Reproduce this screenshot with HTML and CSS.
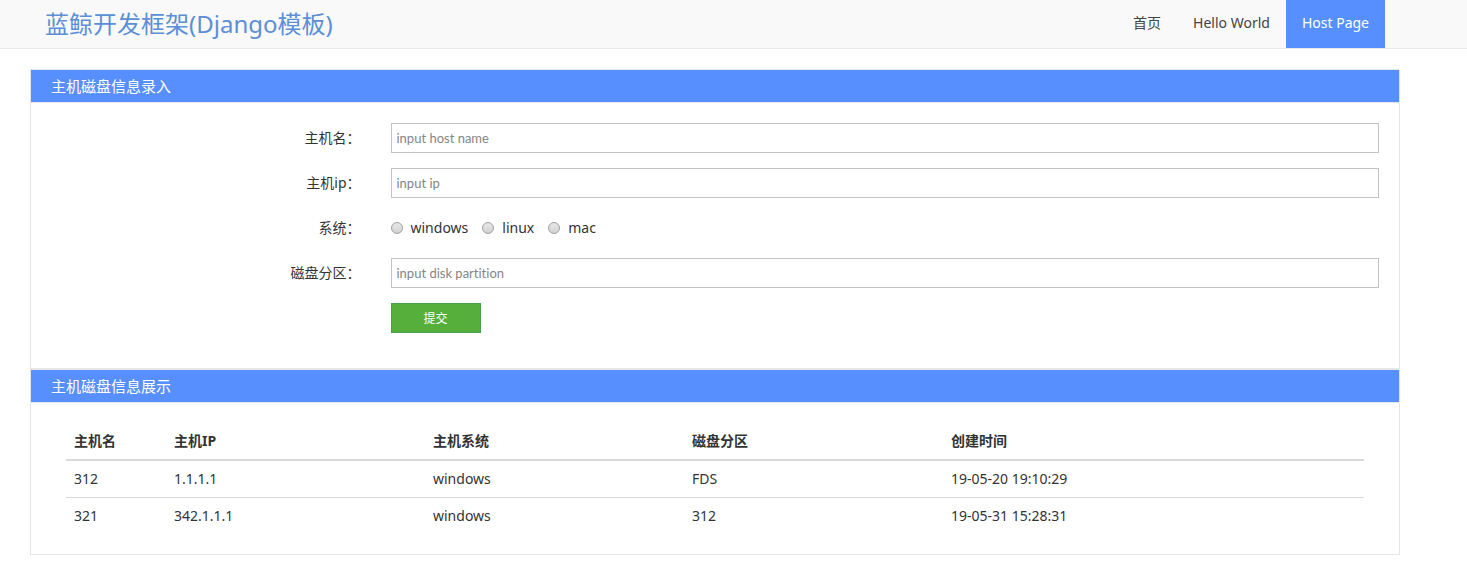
FILE: index.html
```html
<!DOCTYPE html>
<html lang="zh-CN">
<head>
<meta charset="utf-8">
<meta name="viewport" content="width=device-width, initial-scale=1">
<title>蓝鲸开发框架(Django模板)</title>
<link rel="stylesheet" href="styles.css">
</head>
<body>
<header class="navbar">
  <a class="brand" href="#">蓝鲸开发框架(Django模板)</a>
  <nav class="nav">
    <a class="nav-link" href="#">首页</a>
    <a class="nav-link" href="#">Hello World</a>
    <a class="nav-link active" href="#" aria-current="page">Host Page</a>
  </nav>
</header>
<main class="content">
  <section class="panel">
    <h2 class="panel-heading">主机磁盘信息录入</h2>
    <form class="panel-body">
      <div class="form-row">
        <label class="form-label" for="host-name">主机名：</label>
        <div class="form-field"><input class="text-input" id="host-name" type="text" placeholder="input host name"></div>
      </div>
      <div class="form-row">
        <label class="form-label" for="host-ip">主机ip：</label>
        <div class="form-field"><input class="text-input" id="host-ip" type="text" placeholder="input ip"></div>
      </div>
      <div class="form-row" role="radiogroup" aria-labelledby="os-label">
        <span class="form-label" id="os-label">系统：</span>
        <div class="form-field radios">
          <label class="radio-label"><input class="radio" type="radio" name="os" value="windows">windows</label>
          <label class="radio-label"><input class="radio" type="radio" name="os" value="linux">linux</label>
          <label class="radio-label"><input class="radio" type="radio" name="os" value="mac">mac</label>
        </div>
      </div>
      <div class="form-row">
        <label class="form-label" for="partition">磁盘分区：</label>
        <div class="form-field"><input class="text-input" id="partition" type="text" placeholder="input disk partition"></div>
      </div>
      <div class="form-row">
        <span class="form-label"></span>
        <div class="form-field"><button class="submit" type="button">提交</button></div>
      </div>
    </form>
  </section>
  <section class="panel">
    <h2 class="panel-heading">主机磁盘信息展示</h2>
    <div class="table-wrap">
      <table class="table">
        <colgroup><col class="col-name"><col class="col-info"><col class="col-info"><col class="col-info"><col></colgroup>
        <thead>
          <tr><th>主机名</th><th>主机IP</th><th>主机系统</th><th>磁盘分区</th><th>创建时间</th></tr>
        </thead>
        <tbody>
          <tr><td>312</td><td>1.1.1.1</td><td>windows</td><td>FDS</td><td>19-05-20 19:10:29</td></tr>
          <tr><td>321</td><td>342.1.1.1</td><td>windows</td><td>312</td><td>19-05-31 15:28:31</td></tr>
        </tbody>
      </table>
    </div>
  </section>
</main>
</body>
</html>
```
FILE: styles.css
```css
* { box-sizing: border-box; }

body {
  margin: 0;
  background: #fff;
  color: #333;
  font: 14px/20px "Noto Sans", "Noto Sans CJK SC", sans-serif;
}

.navbar {
  display: flex;
  justify-content: space-between;
  padding: 0 82px 0 45px;
  background: #f9f9f9;
  border-bottom: 1px solid #ebebeb;
}

.brand {
  color: #5c8fd6;
  font-size: 24px;
  line-height: 48px;
  text-decoration: none;
}

.nav { display: flex; }

.nav-link {
  padding: 0 16px;
  color: #444;
  line-height: 46px;
  text-decoration: none;
}

.nav-link.active {
  background: #588fff;
  color: #fff;
}

.content { padding: 20px 67px 24px 30px; }

.panel { border: 1px solid #e6e6e6; }

.panel-heading {
  margin: 0;
  padding: 0 20px;
  background: #588fff;
  border-bottom: 1px solid #e6e6e6;
  color: #fff;
  font-size: 15px;
  font-weight: 400;
  line-height: 32px;
}

.panel-body { padding: 20px; }

.form-row {
  display: flex;
  margin: 0 -15px 15px;
}

.form-label {
  width: 25%;
  padding: 0 15px;
  line-height: 30px;
  text-align: right;
}

.form-field {
  width: 75%;
  padding: 0 15px;
}

.text-input {
  display: block;
  width: 100%;
  height: 30px;
  padding: 0 5px;
  background: #fff;
  border: 1px solid #c3c3c3;
  border-radius: 0;
  color: #333;
  font: 13px/20px Lato, "Noto Sans CJK SC", sans-serif;
  font-variant-ligatures: none;
}

.text-input::placeholder { color: #858585; }

.radios {
  display: flex;
  gap: 14px;
}

.radio-label {
  display: flex;
  align-items: center;
  gap: 8px;
}

.radio {
  width: 12px;
  height: 12px;
  margin: 0;
  appearance: none;
  background: linear-gradient(#e8e8e8, #d2d2d2);
  border: 1px solid #a0a0a0;
  border-radius: 50%;
}

.radio:checked { background: radial-gradient(#444 35%, #ddd 40%); }

.submit {
  display: block;
  width: 90px;
  height: 30px;
  padding: 1px 0 0;
  background: #57af3b;
  border: 1px solid #48a04f;
  color: #fff;
  font: inherit;
  font-size: 12px;
}

.table-wrap { padding: 20px 35px; }

.table {
  width: 100%;
  border-spacing: 0;
  table-layout: fixed;
}

.col-name { width: 100px; }

.col-info { width: 259px; }

.table th,
.table td {
  padding: 8px;
  text-align: left;
}

.table th {
  border-bottom: 2px solid #d9d9d9;
  font-weight: 700;
}

.table tr + tr td { border-top: 1px solid #d9d9d9; }
```
